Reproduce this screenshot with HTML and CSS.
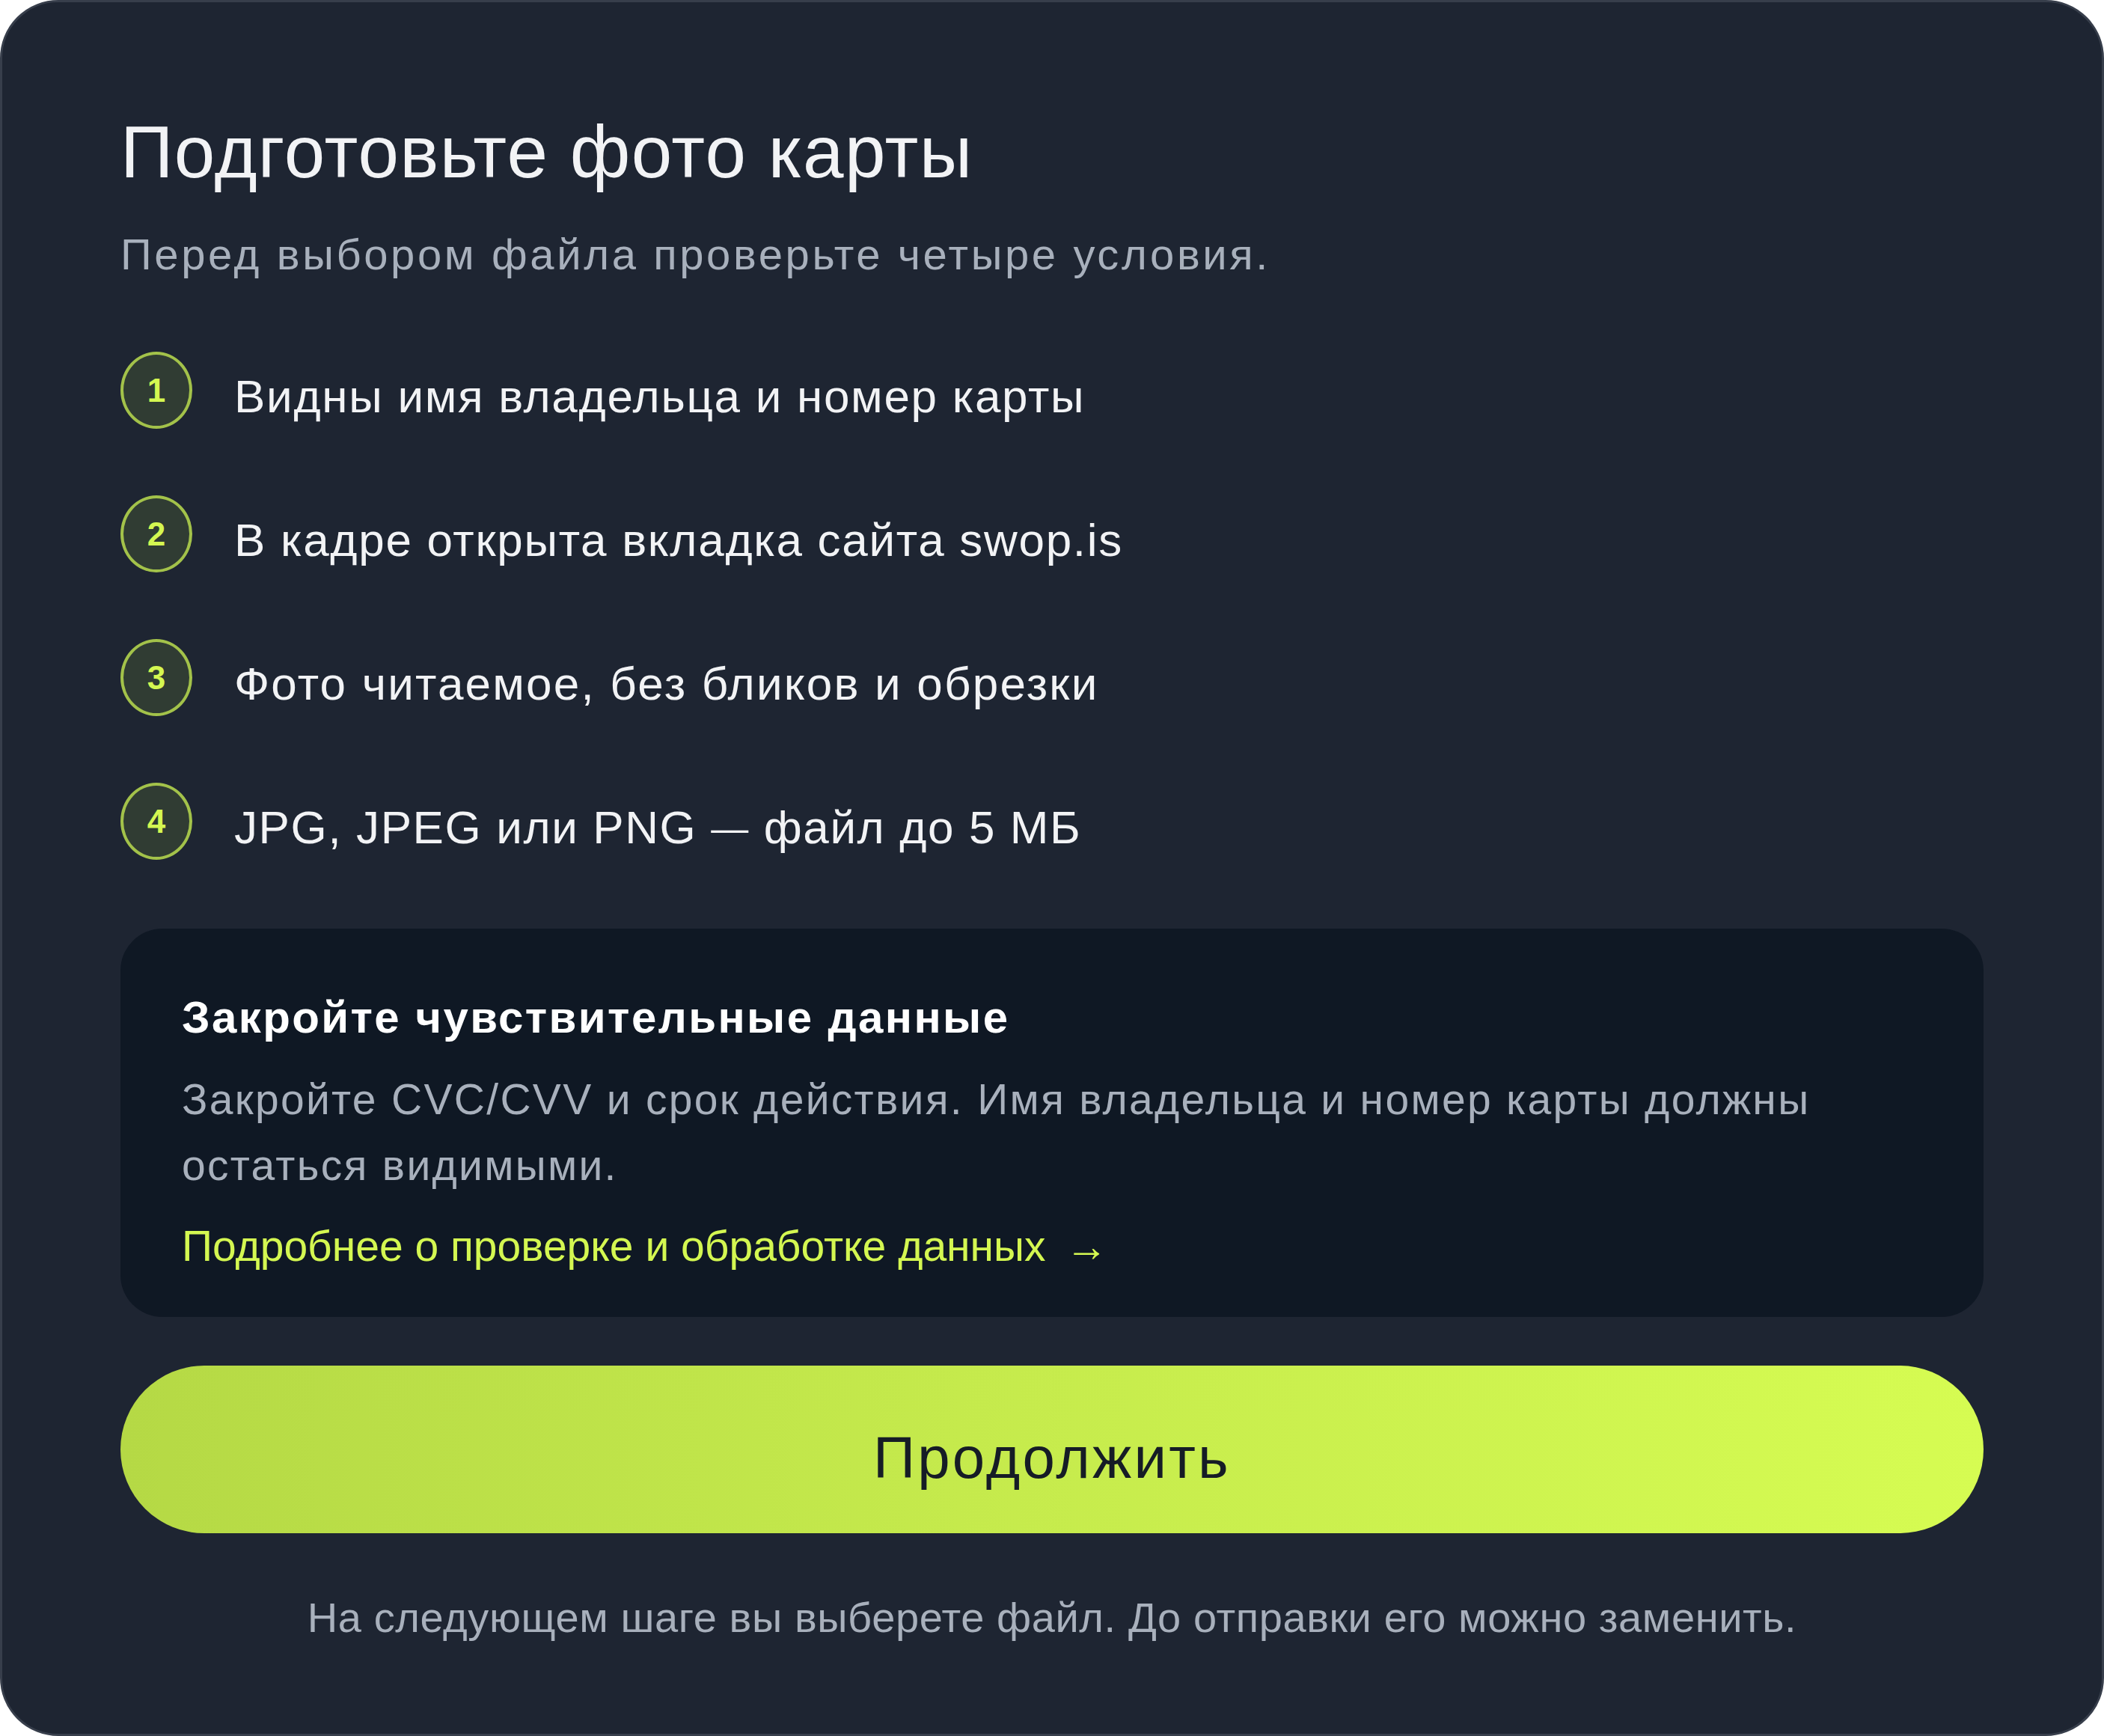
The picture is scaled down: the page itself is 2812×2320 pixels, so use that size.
FILE: index.html
```html
<!DOCTYPE html>
<html lang="ru">
<head>
<meta charset="utf-8">
<title>Подготовьте фото карты</title>
<link rel="stylesheet" href="styles.css">
</head>
<body>
<main class="card">
  <h1 class="title">Подготовьте фото карты</h1>
  <p class="subtitle">Перед выбором файла проверьте четыре условия.</p>
  <ol class="steps">
    <li class="step"><span class="num">1</span><span class="step-text">Видны имя владельца и номер карты</span></li>
    <li class="step"><span class="num">2</span><span class="step-text">В кадре открыта вкладка сайта swop.is</span></li>
    <li class="step"><span class="num">3</span><span class="step-text step-text-wide">Фото читаемое, без бликов и обрезки</span></li>
    <li class="step"><span class="num">4</span><span class="step-text step-text-latin">JPG, JPEG или PNG <span class="dash">—</span> файл до 5 МБ</span></li>
  </ol>
  <section class="notice">
    <h2 class="notice-title">Закройте чувствительные данные</h2>
    <p class="notice-text">Закройте CVC/CVV и срок действия. Имя владельца и номер карты должны остаться видимыми.</p>
    <a class="notice-link" href="#">Подробнее о проверке и обработке данных <span class="arrow">→</span></a>
  </section>
  <button class="continue" type="button">Продолжить</button>
  <p class="footnote">На следующем шаге вы выберете файл. До отправки его можно заменить.</p>
</main>
</body>
</html>
```

FILE: styles.css
```css
html, body {
  margin: 0;
  padding: 0;
  background: #ffffff;
}

body {
  font-family: "Liberation Sans", Arial, Helvetica, sans-serif;
}

.card {
  box-sizing: border-box;
  width: 2812px;
  height: 2320px;
  background: #1e2532;
  border: 3px solid #373e4b;
  border-radius: 78px;
  padding: 141px 158px 0 158px;
  display: flex;
  flex-direction: column;
}

.title {
  margin: 0;
  font-size: 98px;
  line-height: 118px;
  font-weight: 400;
  letter-spacing: 1.3px;
  color: #f2f3f5;
}

.subtitle {
  margin: 43px 0 0 0;
  font-size: 58px;
  line-height: 70px;
  letter-spacing: 3.6px;
  color: #a8b0bc;
}

.steps {
  list-style: none;
  margin: 95px 0 0 0;
  padding: 0;
  display: flex;
  flex-direction: column;
  gap: 82px;
}

.step {
  display: flex;
  align-items: flex-start;
  gap: 56px;
}

.num {
  box-sizing: border-box;
  flex: 0 0 auto;
  width: 96px;
  height: 103px;
  border-radius: 50%;
  border: 4px solid #a3c24a;
  background: #303c33;
  color: #d4f751;
  font-size: 44px;
  font-weight: 700;
  display: flex;
  align-items: center;
  justify-content: center;
}

.step-text {
  font-size: 62px;
  line-height: 100px;
  margin-top: 10px;
  letter-spacing: 1.7px;
  color: #f2f3f5;
}

.step-text-wide {
  letter-spacing: 2.2px;
}

.step-text-latin {
  letter-spacing: 1.6px;
}

.dash {
  font-size: 50px;
  vertical-align: 3px;
}

.notice {
  margin-top: 84px;
  background: #0f1824;
  border-radius: 56px;
  height: 519px;
  box-sizing: border-box;
  padding: 83px 80px 0 82px;
}

.notice-title {
  margin: 0;
  font-size: 60px;
  line-height: 72px;
  font-weight: 700;
  letter-spacing: 2.4px;
  color: #ffffff;
}

.notice-text {
  margin: 29px 0 0 0;
  font-size: 57px;
  line-height: 88px;
  letter-spacing: 2.3px;
  color: #a8b0bc;
}

.notice-link {
  display: block;
  margin-top: 20px;
  font-size: 57px;
  line-height: 88px;
  color: #d4f751;
  text-decoration: none;
}

.arrow {
  margin-left: 10px;
}

.continue {
  margin-top: 65px;
  height: 224px;
  border: none;
  border-radius: 112px;
  background: linear-gradient(90deg, #b5d945 0%, #c5ea4c 45%, #d6fc52 100%);
  color: #161c26;
  font-family: "Liberation Sans", Arial, Helvetica, sans-serif;
  font-size: 78px;
  letter-spacing: 3.2px;
  padding: 22px 0 0 0;
  text-align: center;
}

.footnote {
  margin: 79px 0 0 0;
  font-size: 56px;
  line-height: 68px;
  letter-spacing: 0.6px;
  color: #a8b0bc;
  text-align: center;
}
```
